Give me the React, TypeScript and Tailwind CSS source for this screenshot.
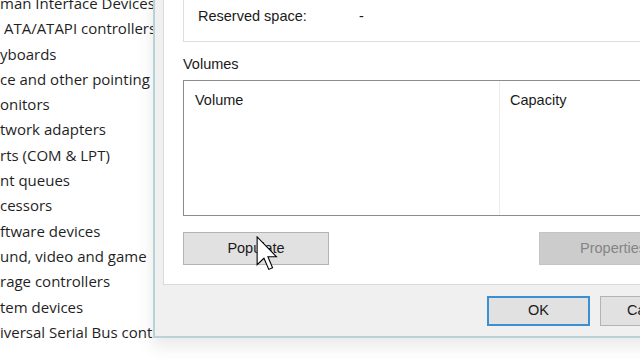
const deviceRows = [
  "man Interface Devices",
  " ATA/ATAPI controllers",
  "yboards",
  "ce and other pointing",
  "onitors",
  "twork adapters",
  "rts (COM & LPT)",
  "nt queues",
  "cessors",
  "ftware devices",
  "und, video and game",
  "rage controllers",
  "tem devices",
  "iversal Serial Bus controllers",
]

const Cursor = () => (
  <svg width="22" height="35" viewBox="0 0 12 19.5" className="absolute left-[256px] top-[236px]">
    <path d="M0.5 0.5 L0.5 16 L4.3 12.4 L7 18.6 L9.1 17.7 L6.5 11.6 L11.3 11.6 Z" fill="#fff" stroke="#000" strokeWidth="0.6" strokeLinejoin="miter" />
  </svg>
)

export default function App() {
  return (
    <div className="relative w-[640px] h-[360px] overflow-hidden bg-white">
      {/* device manager behind the dialog */}
      <ul className="mt-[-9px] font-['Open_Sans','Noto_Sans',sans-serif] text-[15px] leading-[25.3px] text-[#1f1f1f]">
        {deviceRows.map((row) => (
          <li key={row} className="whitespace-pre">{row}</li>
        ))}
      </ul>

      {/* Disk properties window */}
      <div className="absolute left-[153px] top-[-10px] w-[520px] h-[348px] bg-[#f0f0f0] border-l-2 border-b-2 border-[#b6d3d8] shadow-[0_8px_16px_rgba(80,60,70,0.12)] font-['Liberation_Sans',Arial,sans-serif] text-[14.5px] text-[#1a1a1a]">
        <div className="ml-[8px] h-[295px] bg-white border-l border-b border-[#dadada] pl-[19px]">
          <div className="h-[52px] border-l border-r border-b border-[#dedede] pt-[17px] pl-[14px] flex leading-[18px]">
            <span className="w-[161px]">Reserved space:</span>
            <span>-</span>
          </div>

          <p className="mt-[13px] leading-[18px]">Volumes</p>

          <div className="mt-[7px] h-[136px] border border-[#8c8c8c] flex">
            <div className="w-[316px] shrink-0 h-full border-r border-[#ececec] pl-[11px] pt-[10px] leading-[18px]">Volume</div>
            <div className="pl-[10px] pt-[10px] leading-[18px]">Capacity</div>
          </div>

          <div className="mt-[16px] flex">
            <button className="shrink-0 w-[146px] h-[33px] bg-[#e1e1e1] border border-[#b3b3b3] text-[#1a1a1a]">Populate</button>
            <button className="shrink-0 ml-[210px] w-[150px] h-[33px] bg-[#cccccc] border border-[#c4c4c4] text-[#858585] pl-[40px] text-left">Properties</button>
          </div>
        </div>

        <div className="mt-[11px] flex pl-[332px] gap-[10px]">
          <button className="shrink-0 w-[103px] h-[30px] bg-[#e1e1e1] border-2 border-[#3c8fd0]">OK</button>
          <button className="shrink-0 w-[103px] h-[30px] bg-[#e1e1e1] border border-[#b3b3b3] text-left pl-[26px]">Cancel</button>
        </div>
      </div>

      <Cursor />
    </div>
  )
}
